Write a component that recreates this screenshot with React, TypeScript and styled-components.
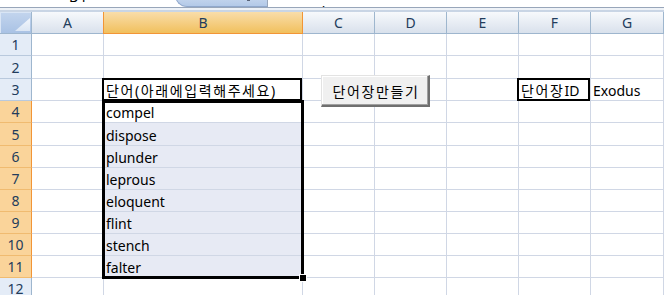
import React from 'react';
import styled, { createGlobalStyle, css } from 'styled-components';

const GlobalStyle = createGlobalStyle`
  html, body { margin: 0; padding: 0; background: #ffffff; overflow: hidden; }
  body { font-family: "Noto Sans", "Noto Sans CJK KR", sans-serif; }
`;

const GRID = '#d0d7e5';
const HEAD_LINE = '#9eb6ce';
const ORANGE = '#f29536';

const Page = styled.div`
  width: 664px;
  height: 295px;
  overflow: hidden;
  display: flex;
  flex-direction: column;
`;

const FormulaBar = styled.div`
  flex: none;
  height: 7px;
  overflow: hidden;
  display: flex;
  align-items: flex-start;
  border-bottom: 1px solid #98a6ba;
  background: #ffffff;
`;

const NameBox = styled.div`
  width: 155px;
  display: flex;
  justify-content: center;
`;

const BarText = styled.span`
  font-size: 14px;
  line-height: 14px;
  margin-top: -10px;
  color: #000;
  white-space: nowrap;
`;

const FxArea = styled.div`
  width: 92px;
  height: 20px;
  margin-top: -13px;
  margin-left: 20px;
  box-sizing: border-box;
  border-bottom-left-radius: 12px;
  background: linear-gradient(#dbe6f4, #b3c9e8);
  border-left: 1px solid #90a8cc;
  border-bottom: 1px solid #90a8cc;
  position: relative;
`;

const FxMark = styled.span`
  position: absolute;
  right: 17px;
  bottom: 5px;
  width: 3px;
  height: 2px;
  background: #5a6478;
`;

const BarDivider = styled.div`
  width: 1px;
  align-self: stretch;
  background: #98a6ba;
`;

const FormulaText = styled.div`
  padding-left: 9px;
`;

const Splitter = styled.div`
  flex: none;
  height: 4px;
  background: linear-gradient(#eef2f7 0 2px, #c9d5e5 2px 4px);
`;

const Sheet = styled.div`
  position: relative;
  display: grid;
  grid-template-columns: 32px 72px 199px 72px 72px 72px 72px 73px;
  grid-template-rows: 22px 22px 23px 22px 22px 23px 22px 22px 22px 22px 22px 22px 22px;
  flex: none;
`;

type Place = { $row: number; $col: number };

const placed = css<Place>`
  grid-row: ${(p) => p.$row};
  grid-column: ${(p) => p.$col};
`;

const Corner = styled.div`
  grid-row: 1;
  grid-column: 1;
  box-sizing: border-box;
  border-right: 1px solid ${HEAD_LINE};
  border-bottom: 1px solid ${HEAD_LINE};
  background: linear-gradient(#c3d5ee, #a9c2e4);
  box-shadow: inset 1px 1px 0 #d9e5f5;
  display: flex;
  align-items: flex-end;
  justify-content: flex-end;
  padding: 0 1px 2px 0;
`;

const ColHeader = styled.div<Place & { $selected?: boolean }>`
  ${placed};
  box-sizing: border-box;
  display: flex;
  align-items: center;
  justify-content: center;
  font-size: 14px;
  color: #233c5c;
  border-right: 1px solid ${HEAD_LINE};
  border-bottom: 1px solid ${HEAD_LINE};
  background: linear-gradient(#f7f9fc, #d9e1ec);
  ${(p) =>
    p.$selected &&
    css`
      background: linear-gradient(#f9ddaa, #f1c05d);
      border-right-color: ${ORANGE};
      border-bottom-color: ${ORANGE};
      box-shadow: -1px 0 0 ${ORANGE};
    `}
`;

const RowHeader = styled.div<Place & { $selected?: boolean }>`
  ${placed};
  box-sizing: border-box;
  display: flex;
  align-items: center;
  justify-content: center;
  font-size: 14px;
  color: #233c5c;
  background: #e4ecf7;
  border-right: 1px solid ${HEAD_LINE};
  border-bottom: 1px solid #b9c9dd;
  ${(p) =>
    p.$selected &&
    css`
      background: #fad49a;
      border-right-color: ${ORANGE};
      border-bottom-color: #f0bb70;
    `}
`;

const Cell = styled.div<Place & { $shade?: boolean; $boxed?: boolean }>`
  ${placed};
  position: relative;
  box-sizing: border-box;
  display: flex;
  align-items: flex-end;
  padding-left: 2px;
  border-right: 1px solid ${GRID};
  border-bottom: 1px solid ${GRID};
  background: ${(p) => (p.$shade ? '#e7eaf4' : '#ffffff')};
  font-size: 14px;
  line-height: 19px;
  color: #000;
  white-space: nowrap;
  ${(p) =>
    p.$boxed &&
    css`
      &::after {
        content: '';
        position: absolute;
        top: -1px;
        left: -2px;
        right: 0;
        bottom: -1px;
        border: 2px solid #000;
        pointer-events: none;
      }
    `}
`;

const Hangul = styled.span`
  letter-spacing: 1.6px;
`;

const Selection = styled.div`
  grid-column: 3;
  grid-row: 5 / 13;
  margin: -1px -1px -1px -2px;
  border: 3px solid #000;
  position: relative;
  z-index: 2;
  pointer-events: none;
`;

const FillHandle = styled.span`
  position: absolute;
  right: -6px;
  bottom: -6px;
  width: 6px;
  height: 6px;
  background: #000;
  border: 1px solid #fff;
`;

const FormButton = styled.button`
  position: absolute;
  left: 321px;
  top: 63px;
  width: 109px;
  height: 32px;
  z-index: 3;
  margin: 0;
  padding: 0 0 0 2px;
  box-sizing: border-box;
  font-family: "Noto Sans", "Noto Sans CJK KR", sans-serif;
  font-size: 14px;
  color: #000;
  background: #f0f0f0;
  border-style: solid;
  border-width: 1px 2px 2px 1px;
  border-color: #e3e3e3 #6f6f6f #6f6f6f #e3e3e3;
  box-shadow: inset -1px -1px 0 #a0a0a0, inset 1px 1px 0 #ffffff;
`;

const columns = ['A', 'B', 'C', 'D', 'E', 'F', 'G'];
const ROWS = 12;

const values: Record<string, React.ReactNode> = {
  B3: <Hangul>단어(아래에입력해주세요)</Hangul>,
  B4: 'compel',
  B5: 'dispose',
  B6: 'plunder',
  B7: 'leprous',
  B8: 'eloquent',
  B9: 'flint',
  B10: 'stench',
  B11: 'falter',
  F3: (
    <span>
      <Hangul>단어장</Hangul>ID
    </span>
  ),
  G3: 'Exodus',
};

const boxed = new Set(['B3', 'F3']);

export default function App() {
  const rows = Array.from({ length: ROWS }, (_, i) => i + 1);
  return (
    <Page>
      <GlobalStyle />
      <FormulaBar>
        <NameBox>
          <BarText>B4</BarText>
        </NameBox>
        <FxArea>
          <FxMark />
        </FxArea>
        <BarDivider />
        <FormulaText>
          <BarText>compel</BarText>
        </FormulaText>
      </FormulaBar>
      <Splitter />
      <Sheet>
        <Corner>
          <svg width="15" height="13" viewBox="0 0 15 13">
            <defs>
              <linearGradient id="tri" x1="0" y1="0" x2="0" y2="1">
                <stop offset="0" stopColor="#f3f7fc" />
                <stop offset="1" stopColor="#dbe6f4" />
              </linearGradient>
            </defs>
            <polygon points="15,0 15,13 0,13" fill="url(#tri)" />
          </svg>
        </Corner>
        {columns.map((c, ci) => (
          <ColHeader key={c} $row={1} $col={ci + 2} $selected={c === 'B'}>
            {c}
          </ColHeader>
        ))}
        {rows.map((r) => (
          <React.Fragment key={r}>
            <RowHeader $row={r + 1} $col={1} $selected={r >= 4 && r <= 11}>
              {r}
            </RowHeader>
            {columns.map((c, ci) => {
              const id = `${c}${r}`;
              return (
                <Cell
                  key={id}
                  $row={r + 1}
                  $col={ci + 2}
                  $shade={c === 'B' && r >= 5 && r <= 11}
                  $boxed={boxed.has(id)}
                >
                  {values[id] ?? ''}
                </Cell>
              );
            })}
          </React.Fragment>
        ))}
        <Selection>
          <FillHandle />
        </Selection>
        <FormButton type="button">
          <Hangul>단어장만들기</Hangul>
        </FormButton>
      </Sheet>
    </Page>
  );
}
